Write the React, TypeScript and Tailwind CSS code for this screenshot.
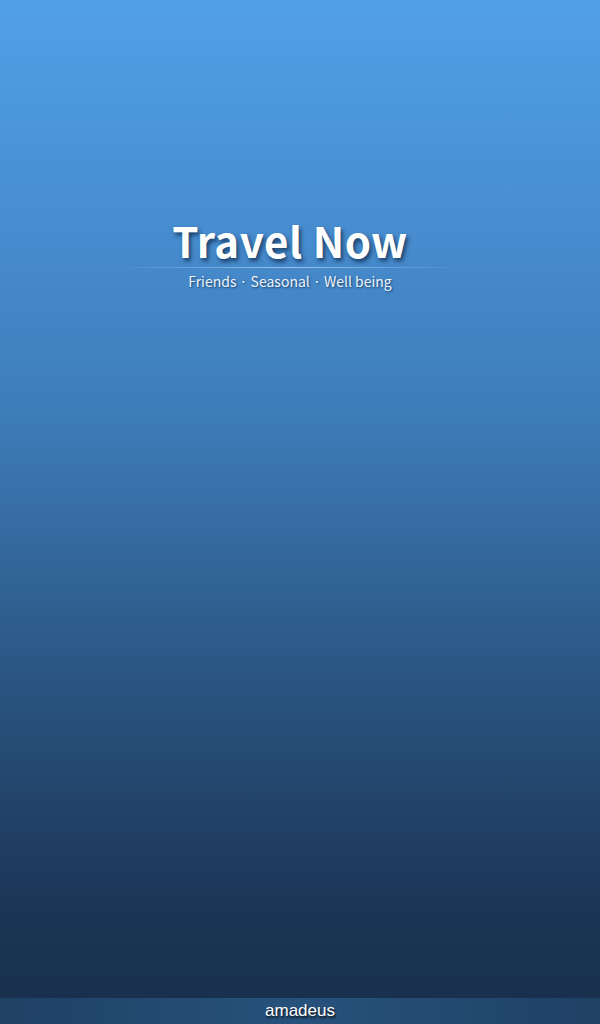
export default function App() {
  return (
    <div className="flex h-[1024px] w-[600px] flex-col overflow-hidden bg-[linear-gradient(to_bottom,#52a0e9_0%,#3e7dba_40%,#2b5784_65%,#1c3657_88%,#172f4b_100%)]" style={{ fontFamily: '"Noto Sans CJK JP", "Noto Sans", sans-serif' }}>
      <div className="flex flex-1 flex-col items-center pr-[20px] pt-[215px]">
        <h1 className="text-[42px] font-bold leading-[50px] tracking-[0.5px] text-white [text-shadow:2px_3px_4px_rgba(0,20,50,0.65)]">Travel Now</h1>
        <div className="mt-[2px] h-px w-[350px] bg-[linear-gradient(to_right,rgba(140,190,240,0),rgba(160,200,240,0.9)_50%,rgba(140,190,240,0))]" />
        <p className="mt-[3px] text-[14px] leading-[20px] text-[#eef4fb] [text-shadow:1px_1px_2px_rgba(0,20,50,0.6)]">Friends · Seasonal · Well being</p>
      </div>
      <div className="flex h-[26px] items-center justify-center bg-[linear-gradient(to_right,#1f4164,#27527c_50%,#1f4164)]">
        <span className="text-[17px] leading-[26px] text-white [text-shadow:1px_2px_2px_rgba(0,0,0,0.8)]" style={{ fontFamily: '"Liberation Sans", Arial, sans-serif' }}>amadeus</span>
      </div>
    </div>
  );
}
